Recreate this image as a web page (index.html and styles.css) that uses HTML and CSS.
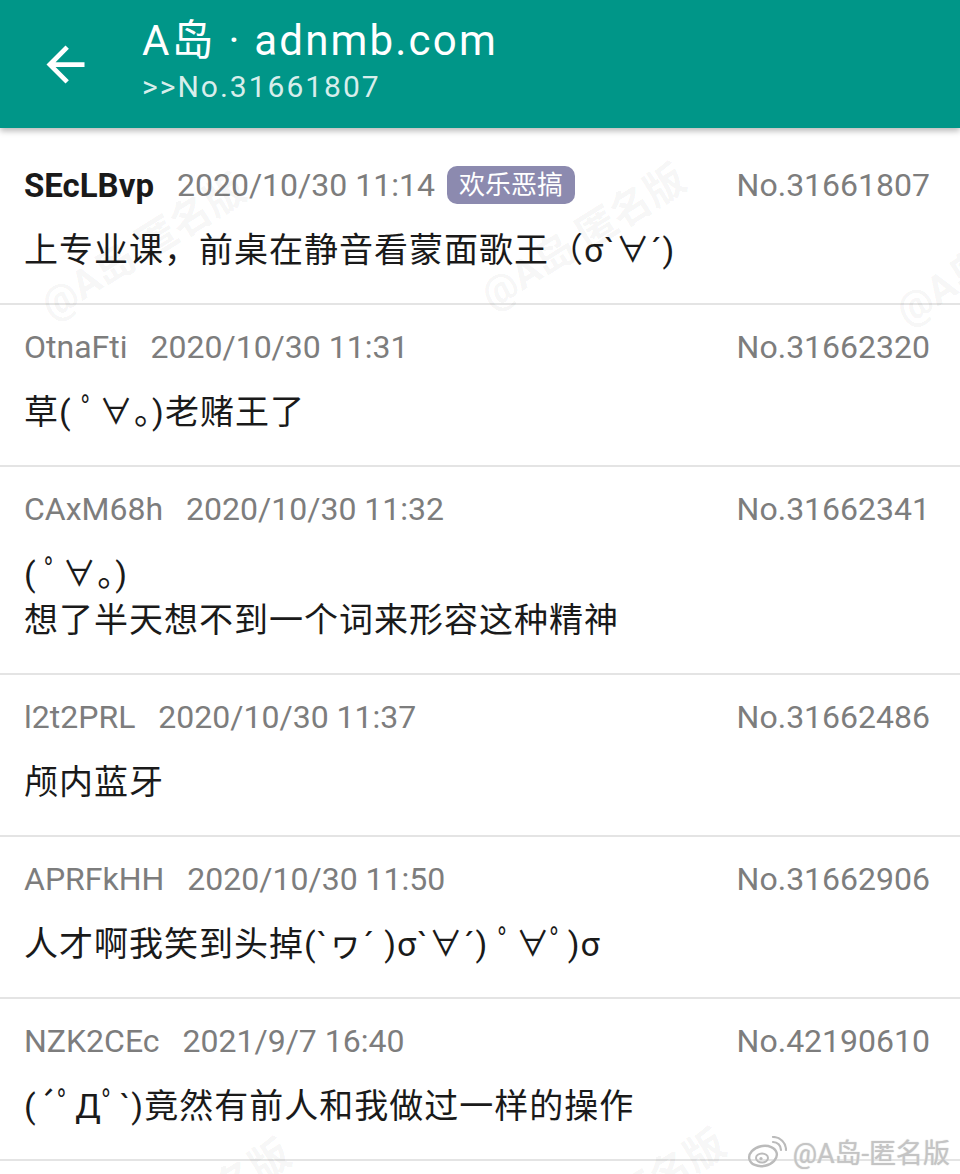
FILE: index.html
```html
<!DOCTYPE html>
<html lang="zh-CN">

<head>
    <meta charset="UTF-8">
    <meta name="viewport" content="width=device-width, initial-scale=1.0">
    <title>A岛 · adnmb.com</title>
    <link rel="stylesheet" href="styles.css">
</head>

<body>
    <div class="page">
        <header class="toolbar">
            <svg class="back" viewBox="0 0 24 24" width="57" height="57">
                <path d="M20 11H7.83l5.59-5.59L12 4l-8 8 8 8 1.41-1.41L7.83 13H20v-2z" fill="#fff"/>
            </svg>
            <div class="titles">
                <h1>A岛 · adnmb.com</h1>
                <p>&gt;&gt;No.31661807</p>
            </div>
        </header>

        <main class="thread">
            <article class="post first">
                <div class="meta">
                    <span class="uid po">SEcLBvp</span>
                    <span class="time">2020/10/30 11:14</span>
                    <span class="tag">欢乐恶搞</span>
                    <span class="no">No.31661807</span>
                </div>
                <div class="content">上专业课，前桌在静音看蒙面歌王（σ`∀´)</div>
            </article>

            <article class="post">
                <div class="meta">
                    <span class="uid">OtnaFti</span>
                    <span class="time">2020/10/30 11:31</span>
                    <span class="no">No.31662320</span>
                </div>
                <div class="content">草( ﾟ∀。)老赌王了</div>
            </article>

            <article class="post">
                <div class="meta">
                    <span class="uid">CAxM68h</span>
                    <span class="time">2020/10/30 11:32</span>
                    <span class="no">No.31662341</span>
                </div>
                <div class="content">( ﾟ∀。)<br>想了半天想不到一个词来形容这种精神</div>
            </article>

            <article class="post">
                <div class="meta">
                    <span class="uid">l2t2PRL</span>
                    <span class="time">2020/10/30 11:37</span>
                    <span class="no">No.31662486</span>
                </div>
                <div class="content">颅内蓝牙</div>
            </article>

            <article class="post">
                <div class="meta">
                    <span class="uid">APRFkHH</span>
                    <span class="time">2020/10/30 11:50</span>
                    <span class="no">No.31662906</span>
                </div>
                <div class="content">人才啊我笑到头掉(`ヮ´ )σ`∀´) ﾟ∀ﾟ)σ</div>
            </article>

            <article class="post">
                <div class="meta">
                    <span class="uid">NZK2CEc</span>
                    <span class="time">2021/9/7 16:40</span>
                    <span class="no">No.42190610</span>
                </div>
                <div class="content">(´ﾟДﾟ`)竟然有前人和我做过一样的操作</div>
            </article>
        </main>

        <!-- watermark layer -->
        <div class="wm wm-1">@A岛 匿名版</div>
        <div class="wm wm-2">@A岛 匿名版</div>
        <div class="wm wm-3">@A岛</div>
        <div class="wm wm-4">@A岛 匿名版</div>
        <div class="wm wm-5">@A岛 匿名版</div>

        <div class="weibo">
            <svg viewBox="0 0 40 32" width="40" height="32">
                <ellipse cx="16" cy="20" rx="14" ry="10" fill="none" stroke="#bbb" stroke-width="2.4" transform="rotate(-12 16 20)"/>
                <ellipse cx="15" cy="22" rx="6" ry="4.5" fill="none" stroke="#bbb" stroke-width="2"/>
                <circle cx="14" cy="22.5" r="1.6" fill="#bbb"/>
                <path d="M26 6a8 8 0 0 1 8 8" fill="none" stroke="#bbb" stroke-width="2.2" stroke-linecap="round"/>
                <path d="M26 1a13 13 0 0 1 13 13" fill="none" stroke="#bbb" stroke-width="2.2" stroke-linecap="round"/>
            </svg>
            <span>@A岛-匿名版</span>
        </div>
    </div>
</body>

</html>
```

FILE: styles.css
```css
* {
    margin: 0;
    padding: 0;
    box-sizing: border-box;
}

body {
    font-family: Roboto, "Noto Sans CJK SC", sans-serif;
    background: white;
    color: #1a1a1a;
}

.page {
    width: 960px;
    height: 1174px;
    overflow: hidden;
    position: relative;
}

/* Toolbar */
.toolbar {
    height: 128px;
    background: #009688;
    color: white;
    display: flex;
    align-items: flex-start;
    padding-left: 37px;
    box-shadow: 0 3px 6px rgba(0, 0, 0, 0.28);
    position: relative;
    z-index: 2;
}

.back {
    flex: none;
    align-self: center;
    margin-right: 48px;
}

.titles {
    padding-top: 17px;
}

.titles h1 {
    font-weight: 400;
    font-size: 42px;
    letter-spacing: 2.2px;
    line-height: 48px;
    margin-bottom: 4px;
}

.titles p {
    font-size: 30px;
    letter-spacing: 2px;
    line-height: 36px;
    color: rgba(255, 255, 255, 0.85);
}

/* Posts */
.thread {
    border-bottom: 2px solid #e4e4e4;
}

.post {
    padding: 22px 30px 30px 24px;
    border-bottom: 2px solid #e4e4e4;
}

.post.first {
    padding-top: 37px;
}

.post:last-child {
    border-bottom: none;
}

.meta {
    display: flex;
    align-items: center;
    height: 40px;
    font-size: 32px;
    color: #7d7d7d;
}

.uid {
    margin-right: 23px;
}

.uid.po {
    color: #1a1a1a;
    font-size: 33px;
    font-weight: 700;
}

.tag {
    margin-left: 12px;
    background: #8c8aaf;
    color: white;
    font-size: 26px;
    line-height: 38px;
    padding: 0 12px;
    border-radius: 10px;
}

.no {
    margin-left: auto;
}

.content {
    margin-top: 22px;
    font-size: 34px;
    letter-spacing: 1px;
    line-height: 46px;
}

/* Watermarks */
.wm {
    position: absolute;
    font-size: 40px;
    font-weight: 700;
    color: rgba(0, 0, 0, 0.055);
    white-space: nowrap;
    transform: rotate(-32deg);
    pointer-events: none;
}

.wm-1 { left: 25px; top: 215px; }
.wm-2 { left: 465px; top: 205px; }
.wm-3 { left: 890px; top: 255px; }
.wm-4 { left: 70px; top: 1180px; }
.wm-5 { left: 505px; top: 1170px; }

.weibo {
    position: absolute;
    right: 10px;
    top: 1132px;
    display: flex;
    align-items: center;
    gap: 6px;
    font-size: 27px;
    color: #c4c4c4;
    text-shadow: 0 0 2px #fff, 0 0 1px #999;
}
```
